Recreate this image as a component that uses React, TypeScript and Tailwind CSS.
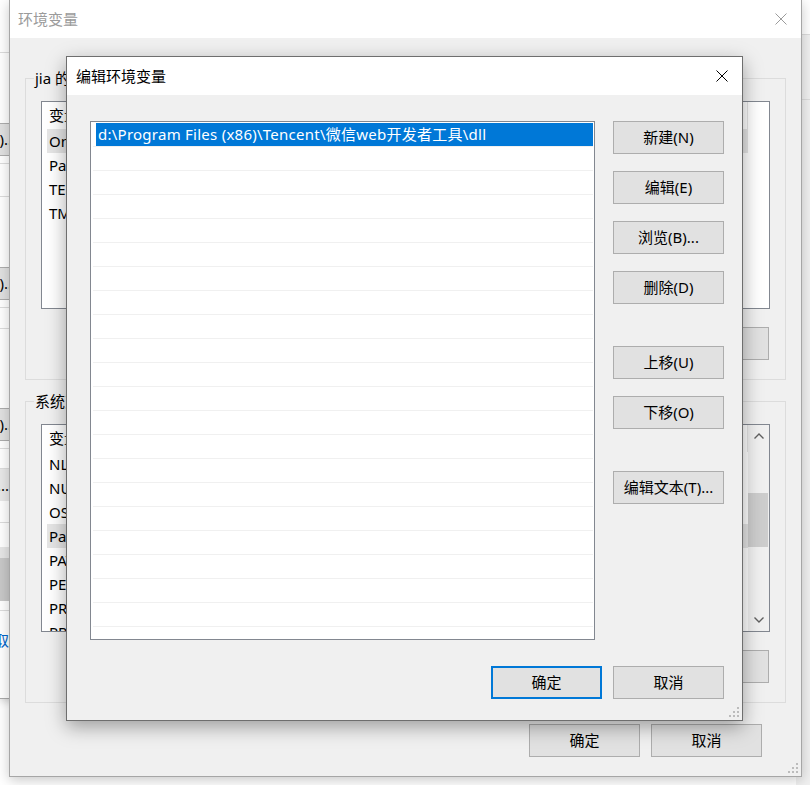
import type { ReactNode } from 'react';

const userVars = ['OneDrive', 'Path', 'TEMP', 'TMP'];
const sysVars = [
  'NLS_LANG',
  'NUMBER_OF_PROCESSORS',
  'OS',
  'Path',
  'PATHEXT',
  'PERL5LIB',
  'PROCESSOR_ARCHITECTURE',
  'PROCESSOR_IDENTIFIER',
];

const dialogRows = Array.from({ length: 22 }, (_, i) => i);

function Btn({ children, primary = false }: { children: ReactNode; primary?: boolean }) {
  return (
    <div
      className={`flex h-[33px] w-[111px] shrink-0 items-center justify-center bg-[#e1e1e1] text-[15px] leading-none text-black ${
        primary ? 'border-2 border-[#0078d7]' : 'border border-[#adadad]'
      }`}
    >
      {children}
    </div>
  );
}

function CloseIcon({ color }: { color: string }) {
  return (
    <svg width="12" height="12" viewBox="0 0 12 12">
      <path d="M0.5 0.5 L11.5 11.5 M11.5 0.5 L0.5 11.5" stroke={color} strokeWidth="1" fill="none" />
    </svg>
  );
}

function Grip() {
  return (
    <svg width="10" height="10" viewBox="0 0 10 10" fill="#bcbcbc">
      <rect x="8" y="0" width="2" height="2" />
      <rect x="4" y="4" width="2" height="2" />
      <rect x="8" y="4" width="2" height="2" />
      <rect x="0" y="8" width="2" height="2" />
      <rect x="4" y="8" width="2" height="2" />
      <rect x="8" y="8" width="2" height="2" />
    </svg>
  );
}

function Chevron({ down = false }: { down?: boolean }) {
  return (
    <svg width="10" height="6" viewBox="0 0 10 6">
      <path
        d={down ? 'M0.5 0.5 L5 5 L9.5 0.5' : 'M0.5 5.5 L5 1 L9.5 5.5'}
        stroke="#606060"
        strokeWidth="1.4"
        fill="none"
      />
    </svg>
  );
}

function GroupBox({ label, children }: { label: string; children: ReactNode }) {
  return (
    <div className="relative border border-[#dcdcdc] px-[15px] pt-[22px] pb-[19px]">
      <span className="absolute left-[8px] top-[-11px] bg-[#f0f0f0] px-[1px] text-[15px] leading-[20px]">{label}</span>
      {children}
    </div>
  );
}

function VarList({ names, selected, scroll = false }: { names: string[]; selected: number; scroll?: boolean }) {
  return (
    <div className="flex h-[208px] overflow-hidden border border-[#828790] bg-white">
      <div className="flex w-[706px] shrink-0 flex-col overflow-hidden">
        <div className="flex h-[27px] shrink-0 items-center border-r border-[#e5e5e5] pl-[7px] text-[15px]">
          <span className="w-[240px]">变量</span>
          <span>值</span>
        </div>
        {names.map((n, i) => (
          <div
            key={n + i}
            className={`flex h-[24px] shrink-0 items-center text-[15px] whitespace-nowrap ${
              i === selected ? 'ml-[5px] bg-[#e5e5e5] pl-[2px]' : 'pl-[7px]'
            }`}
          >
            {n}
          </div>
        ))}
      </div>
      {scroll ? (
        <div className="flex w-[21px] shrink-0 flex-col bg-[#f0f0f0]">
          <div className="flex h-[22px] items-center justify-center">
            <Chevron />
          </div>
          <div className="h-[46px]" />
          <div className="mr-[1px] h-[54px] bg-[#cdcdcd]" />
          <div className="flex-1" />
          <div className="flex h-[22px] items-center justify-center">
            <Chevron down />
          </div>
        </div>
      ) : (
        <div className="flex-1" />
      )}
    </div>
  );
}

function GroupButtons() {
  return (
    <div className="mt-[18px] flex justify-end gap-[12px] pr-[1px]">
      <Btn>新建(W)...</Btn>
      <Btn>编辑(I)...</Btn>
      <Btn>删除(L)</Btn>
    </div>
  );
}

function LeftStrip() {
  const line = <div className="h-px shrink-0 bg-[#dcdcdc]" />;
  const frag = (text: string) => (
    <div className="flex h-[33px] shrink-0 items-center justify-end border-y border-[#adadad] bg-[#e1e1e1] pr-[6px] text-[15px] whitespace-nowrap">
      {text}
    </div>
  );
  return (
    <div className="absolute left-0 top-0 flex h-[699px] w-[22px] flex-col overflow-hidden border-b border-[#aaaaaa] bg-white shadow-[0_2px_8px_rgba(0,0,0,0.2)]">
      <div className="h-[52px] shrink-0" />
      {line}
      <div className="h-[70px] shrink-0" />
      {frag('编辑(E)...')}
      <div className="h-[7px] shrink-0" />
      {line}
      <div className="h-[32px] shrink-0" />
      {line}
      <div className="h-[70px] shrink-0" />
      {frag('编辑(E)...')}
      <div className="h-[7px] shrink-0" />
      {line}
      <div className="h-[20px] shrink-0" />
      {line}
      <div className="h-[79px] shrink-0" />
      {frag('编辑(E)...')}
      <div className="h-[7px] shrink-0" />
      {line}
      <div className="h-[19px] shrink-0" />
      {line}
      <div className="flex h-[32px] shrink-0 items-center justify-end bg-[#e8e8e8] pr-[13px] text-[15px] whitespace-nowrap">...</div>
      <div className="h-[21px] shrink-0" />
      {line}
      <div className="h-[24px] shrink-0" />
      <div className="h-[11px] shrink-0 bg-[#e6e6e6]" />
      <div className="h-[43px] shrink-0 bg-[#c8c8c8]" />
      <div className="h-[9px] shrink-0" />
      {line}
      <div className="h-[19px] shrink-0" />
      <div className="flex h-[21px] shrink-0 items-center justify-end pr-[13px] text-[15px] whitespace-nowrap text-[#0066cc]">获取</div>
    </div>
  );
}

function RightStrip() {
  return (
    <div className="absolute left-[796px] top-0 flex h-full w-[14px] flex-col bg-[#f0f0f0]">
      <div className="h-[35px] shrink-0 border-b border-[#dcdcdc] bg-white" />
      <div className="h-[64px] shrink-0" />
      <div className="h-px bg-[#dcdcdc]" />
    </div>
  );
}

function EnvWindow() {
  return (
    <div className="absolute left-[9px] top-0 flex h-[777px] w-[793px] flex-col border border-t-0 border-[#a6a6a6] bg-[#f0f0f0] shadow-[0_3px_12px_rgba(0,0,0,0.22)]">
      <div className="flex h-[38px] shrink-0 items-center justify-between bg-white pl-[8px] pr-[14px]">
        <span className="text-[15px] text-[#9b9b9b]">环境变量</span>
        <CloseIcon color="#9b9b9b" />
      </div>
      <div className="flex flex-1 flex-col px-[15px] pt-[40px]">
        <GroupBox label="jia 的用户变量(U)">
          <VarList names={userVars} selected={0} />
          <GroupButtons />
        </GroupBox>
        <div className="mt-[21px]">
          <GroupBox label="系统变量(S)">
            <VarList names={sysVars} selected={3} scroll />
            <GroupButtons />
          </GroupBox>
        </div>
        <div className="mt-[21px] flex justify-end gap-[11px] pr-[24px]">
          <Btn>确定</Btn>
          <Btn>取消</Btn>
        </div>
      </div>
      <div className="absolute right-[3px] bottom-[3px]">
        <Grip />
      </div>
    </div>
  );
}

function EditDialog() {
  return (
    <div className="absolute left-[66px] top-[56px] flex h-[665px] w-[677px] flex-col border border-[#6e6e6e] bg-[#f0f0f0] shadow-[0_6px_18px_rgba(0,0,0,0.35)]">
      <div className="flex h-[38px] shrink-0 items-center justify-between bg-white pl-[9px] pr-[14px]">
        <span className="text-[15px] text-black">编辑环境变量</span>
        <CloseIcon color="#000000" />
      </div>
      <div className="flex flex-1 flex-col px-[18px] pt-[26px] pb-[21px] pl-[23px]">
        <div className="flex gap-[18px]">
          <div className="flex h-[519px] w-[505px] flex-col overflow-hidden border border-[#828790] bg-white pt-[1px] pr-[1px] pl-[2px]">
            {dialogRows.map((i) => (
              <div key={i} className="flex h-[24px] shrink-0 flex-col border-b border-[#f0f0f0]">
                {i === 0 ? (
                  <div className="ml-[3px] flex h-[23px] items-center bg-[#0078d7] pl-[2px] text-[15px] tracking-[0.25px] whitespace-nowrap text-white">
                    d:\Program Files (x86)\Tencent\微信web开发者工具\dll
                  </div>
                ) : null}
              </div>
            ))}
          </div>
          <div className="flex flex-col">
            <div className="flex flex-col gap-[17px]">
              <Btn>新建(N)</Btn>
              <Btn>编辑(E)</Btn>
              <Btn>浏览(B)...</Btn>
              <Btn>删除(D)</Btn>
            </div>
            <div className="mt-[42px] flex flex-col gap-[17px]">
              <Btn>上移(U)</Btn>
              <Btn>下移(O)</Btn>
            </div>
            <div className="mt-[42px]">
              <Btn>编辑文本(T)...</Btn>
            </div>
          </div>
        </div>
        <div className="mt-[26px] flex justify-end gap-[11px]">
          <Btn primary>确定</Btn>
          <Btn>取消</Btn>
        </div>
      </div>
      <div className="absolute right-[3px] bottom-[3px]">
        <Grip />
      </div>
    </div>
  );
}

export default function App() {
  return (
    <div className="relative h-[785px] w-[810px] overflow-hidden bg-white font-['Noto_Sans','Noto_Sans_CJK_SC',sans-serif] text-black">
      <LeftStrip />
      <RightStrip />
      <EnvWindow />
      <EditDialog />
    </div>
  );
}
